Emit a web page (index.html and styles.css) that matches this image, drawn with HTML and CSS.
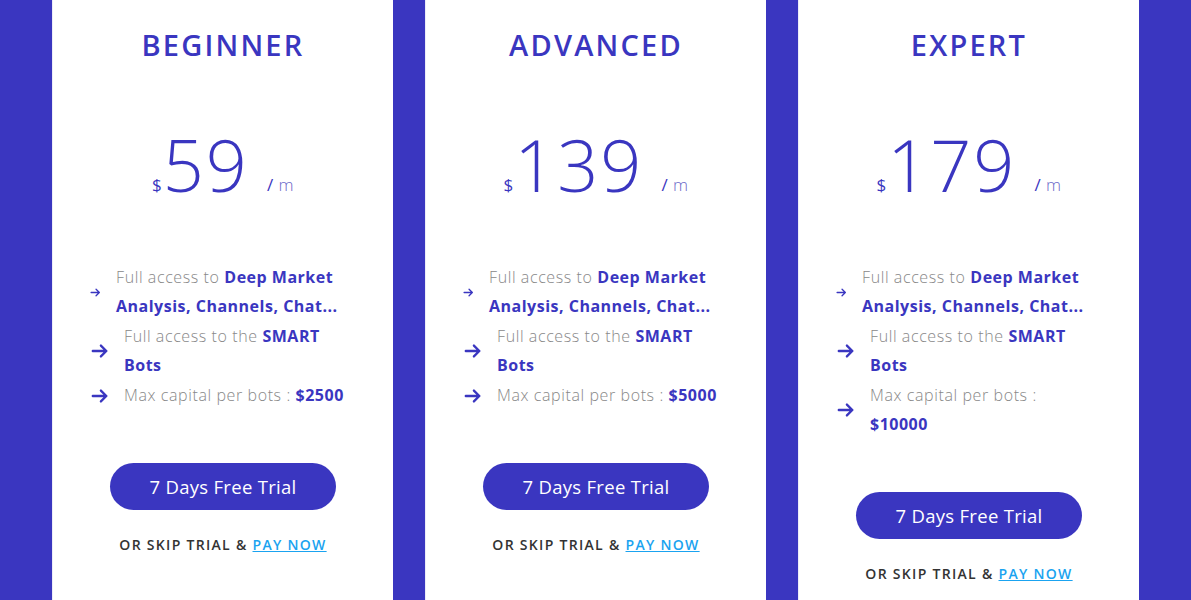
FILE: index.html
```html
<!DOCTYPE html>
<html lang="en">
<head>
<meta charset="utf-8">
<title>Pricing</title>
<link rel="stylesheet" href="styles.css">
</head>
<body>
<div class="pricing">
  <div class="card">
    <h2 class="plan">BEGINNER</h2>
    <div class="price"><span class="cur">$</span><span class="amount">59</span><span class="per"><span class="slash">/</span> m</span></div>
    <ul class="features">
      <li><svg class="arrow sm" viewBox="0 0 20 20"><path d="M2 10h15M11 4l6 6-6 6"/></svg><span>Full access to <b>Deep Market Analysis, Channels, Chat...</b></span></li>
      <li><svg class="arrow" viewBox="0 0 20 20"><path d="M2 10h15M11 4l6 6-6 6"/></svg><span>Full access to the <b>SMART Bots</b></span></li>
      <li><svg class="arrow" viewBox="0 0 20 20"><path d="M2 10h15M11 4l6 6-6 6"/></svg><span>Max capital per bots : <b>$2500</b></span></li>
    </ul>
    <a class="btn" href="#">7 Days Free Trial</a>
    <p class="skip">OR SKIP TRIAL &amp; <a href="#">PAY NOW</a></p>
  </div>
  <div class="card">
    <h2 class="plan">ADVANCED</h2>
    <div class="price"><span class="cur">$</span><span class="amount">139</span><span class="per"><span class="slash">/</span> m</span></div>
    <ul class="features">
      <li><svg class="arrow sm" viewBox="0 0 20 20"><path d="M2 10h15M11 4l6 6-6 6"/></svg><span>Full access to <b>Deep Market Analysis, Channels, Chat...</b></span></li>
      <li><svg class="arrow" viewBox="0 0 20 20"><path d="M2 10h15M11 4l6 6-6 6"/></svg><span>Full access to the <b>SMART Bots</b></span></li>
      <li><svg class="arrow" viewBox="0 0 20 20"><path d="M2 10h15M11 4l6 6-6 6"/></svg><span>Max capital per bots : <b>$5000</b></span></li>
    </ul>
    <a class="btn" href="#">7 Days Free Trial</a>
    <p class="skip">OR SKIP TRIAL &amp; <a href="#">PAY NOW</a></p>
  </div>
  <div class="card">
    <h2 class="plan">EXPERT</h2>
    <div class="price"><span class="cur">$</span><span class="amount">179</span><span class="per"><span class="slash">/</span> m</span></div>
    <ul class="features">
      <li><svg class="arrow sm" viewBox="0 0 20 20"><path d="M2 10h15M11 4l6 6-6 6"/></svg><span>Full access to <b>Deep Market Analysis, Channels, Chat...</b></span></li>
      <li><svg class="arrow" viewBox="0 0 20 20"><path d="M2 10h15M11 4l6 6-6 6"/></svg><span>Full access to the <b>SMART Bots</b></span></li>
      <li><svg class="arrow" viewBox="0 0 20 20"><path d="M2 10h15M11 4l6 6-6 6"/></svg><span>Max capital per bots : <b>$10000</b></span></li>
    </ul>
    <a class="btn" href="#">7 Days Free Trial</a>
    <p class="skip">OR SKIP TRIAL &amp; <a href="#">PAY NOW</a></p>
  </div>
</div>
</body>
</html>
```

FILE: styles.css
```css
* { box-sizing: border-box; }
html, body { margin: 0; padding: 0; }
body {
  background: #3a36c0;
  font-family: "Open Sans", "Liberation Sans", sans-serif;
  overflow: hidden;
}
.pricing {
  display: flex;
  gap: 32px;
  padding: 0 52px;
  height: 600px;
}
.card {
  flex: 0 0 341px;
  background: #fff;
  border-left: 1px solid #ececf8;
  display: flex;
  flex-direction: column;
  align-items: center;
}
.plan {
  margin: 27px 0 0;
  font-size: 29px;
  line-height: 36px;
  font-weight: 600;
  color: #3a36c0;
  letter-spacing: 2.2px;
}
.price {
  margin-top: 61px;
  height: 80px;
  text-align: center;
  color: #3a36c0;
  line-height: 80px;
  white-space: nowrap;
}
.cur { font-size: 17px; margin-right: 1px; vertical-align: 1px; }
.amount { font-size: 72px; font-weight: 300; letter-spacing: 2px; }
.per { font-size: 17px; margin-left: 18px; color: #6a67c8; font-weight: 300; vertical-align: 1px; letter-spacing: 0.5px; }
.slash { color: #3a36c0; font-weight: 400; }
.features {
  list-style: none;
  margin: 59px 0 0;
  padding: 0 40px 0 37px;
  align-self: stretch;
}
.features li {
  display: flex;
  align-items: center;
  font-size: 16px;
  line-height: 29px;
  color: #888;
  font-weight: 300;
  letter-spacing: 0.6px;
  margin-bottom: 1px;
}
.features b { color: #3a36c0; font-weight: 700; letter-spacing: 0.5px; }
.arrow {
  flex: 0 0 18px;
  width: 18px;
  height: 18px;
  margin: 0 15px 0 1px;
  fill: none;
  stroke: #3a36c0;
  stroke-width: 2.6;
  stroke-linecap: round;
  stroke-linejoin: round;
}
.arrow.sm {
  flex-basis: 11px;
  width: 11px;
  height: 11px;
  margin: 0 15px 0 0;
  stroke-width: 2.4;
}
.btn {
  margin-top: 52px;
  width: 226px;
  height: 47px;
  border-radius: 24px;
  background: #3a36c0;
  color: #fff;
  text-decoration: none;
  font-size: 18.5px;
  letter-spacing: 0.3px;
  display: flex;
  align-items: center;
  justify-content: center;
}
.skip {
  margin: 25px 0 0;
  font-size: 14px;
  line-height: 20px;
  font-weight: 600;
  color: #333;
  letter-spacing: 1.3px;
}
.skip a { color: #1aa3f0; text-decoration: underline; }
```
